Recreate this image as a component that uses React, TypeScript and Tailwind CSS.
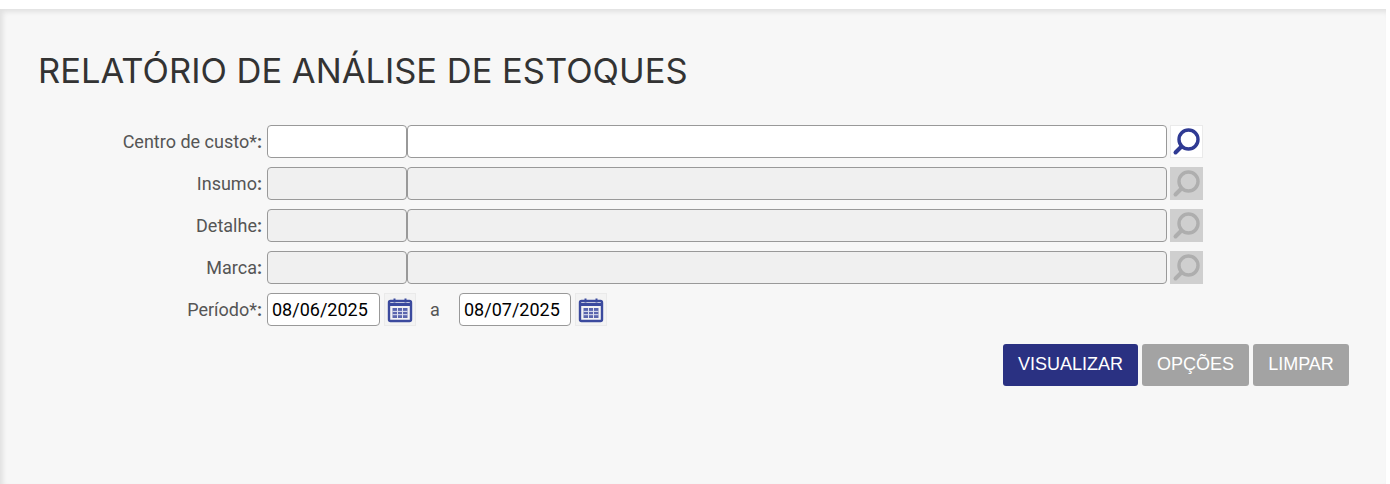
import React from 'react';

const SearchIcon = ({ color }: { color: string }) => (
    <svg className="shrink-0" width="33" height="33" viewBox="0 0 33 33" fill="none">
        <circle cx="18.5" cy="14.5" r="9.5" stroke={color} strokeWidth="3.4" />
        <path d="M11.5 21.5L5.5 27.5" stroke={color} strokeWidth="4" strokeLinecap="round" />
    </svg>
);

const CalendarIcon = () => (
    <svg className="shrink-0" width="32" height="33" viewBox="0 0 32 33" fill="none">
        <rect x="5" y="8" width="22" height="20" rx="1.5" stroke="#3b4a9e" strokeWidth="2.4" />
        <path d="M5 11.5H27" stroke="#3b4a9e" strokeWidth="3" />
        <path d="M10.5 5.5V9.5M21.5 5.5V9.5" stroke="#3b4a9e" strokeWidth="2" />
        <path d="M8.5 15H23.5V25H8.5Z" fill="#5a66ae" />
        <path d="M13.5 15V25M18.5 15V25M8.5 18.4H23.5M8.5 21.7H23.5" stroke="#dfe2f0" strokeWidth="1" />
    </svg>
);

const LookupRow = ({ label, disabled }: { label: string, disabled?: boolean }) => (
    <div className="flex items-center h-[33px]">
        <label className="w-[267px] pr-[5px] text-right text-[18px] text-[#555]">{label}<span className="font-bold">:</span></label>
        <input disabled={disabled} className={`w-[140px] h-[33px] border border-[#999] rounded-[4px] ${disabled ? 'bg-[#f0f0f0]' : 'bg-white'}`} />
        <input disabled={disabled} className={`w-[760px] h-[33px] border border-[#999] rounded-[4px] ${disabled ? 'bg-[#f0f0f0]' : 'bg-white'}`} />
        <button className={`ml-[3px] w-[33px] h-[33px] flex items-center justify-center border ${disabled ? 'bg-[#cfcfcf] border-[#cfcfcf]' : 'bg-white border-[#eaeaea]'}`}>
            <SearchIcon color={disabled ? '#aeaeae' : '#2f3a93'} />
        </button>
    </div>
);

const DateField = ({ value, width }: { value: string, width: string }) => (
    <>
        <input readOnly value={value} className={`${width} h-[33px] border border-[#999] rounded-[4px] bg-white px-[4px] text-[18px] text-black`} />
        <button className="ml-[4px] w-[32px] h-[33px] flex items-center justify-center border border-[#eaeaea] bg-[#f3f3f3]">
            <CalendarIcon />
        </button>
    </>
);

export default function App() {
    return (
        <div className="h-[484px] bg-white font-['Roboto',sans-serif] overflow-hidden">
            <div className="mt-[9px] h-[475px] mr-[4px] bg-[#f7f7f7] shadow-[inset_3px_3px_5px_rgba(0,0,0,0.09)] pt-[38px] pl-[38px] pr-[37px]">
                <h1 className="font-['Inter',sans-serif] text-[34.5px] leading-[48px] text-[#333] font-normal">RELATÓRIO DE ANÁLISE DE ESTOQUES</h1>
                <div className="-ml-[38px] mt-[30px] flex flex-col gap-[9px]">
                    <LookupRow label="Centro de custo*" />
                    <LookupRow label="Insumo" disabled />
                    <LookupRow label="Detalhe" disabled />
                    <LookupRow label="Marca" disabled />
                    <div className="flex items-center h-[33px]">
                        <label className="w-[267px] pr-[5px] text-right text-[18px] text-[#555]">Período*<span className="font-bold">:</span></label>
                        <DateField value="08/06/2025" width="w-[113px]" />
                        <span className="w-[43px] pr-[5px] text-center text-[18px] text-[#555]">a</span>
                        <DateField value="08/07/2025" width="w-[112px]" />
                    </div>
                </div>
                <div className="mt-[18px] flex justify-end gap-[4px] font-['Liberation_Sans',sans-serif] text-[18px] text-white">
                    <button className="w-[135px] h-[42px] pb-[2px] bg-[#2a3182] rounded-[3px]">VISUALIZAR</button>
                    <button className="w-[107px] h-[42px] pb-[2px] bg-[#a3a3a3] rounded-[3px]">OPÇÕES</button>
                    <button className="w-[96px] h-[42px] pb-[2px] bg-[#a3a3a3] rounded-[3px]">LIMPAR</button>
                </div>
            </div>
        </div>
    );
}
